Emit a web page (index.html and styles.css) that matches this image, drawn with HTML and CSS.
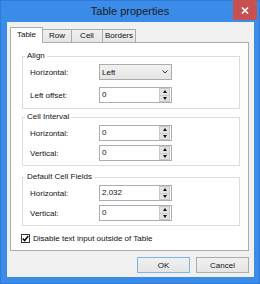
FILE: index.html
```html
<!DOCTYPE html>
<html>
<head>
<meta charset="utf-8">
<link rel="stylesheet" href="styles.css">
</head>
<body>
<div class="window">
  <div class="titlebar">
    <span class="title">Table properties</span>
    <span class="close">
      <svg width="8" height="7" viewBox="0 0 8 7"><path d="M1 0.5 L7 6.5 M7 0.5 L1 6.5" stroke="#fff" stroke-width="1.6"/></svg>
    </span>
  </div>
  <div class="client">
    <div class="tabs">
      <div class="tab active t-table">Table</div>
      <div class="tab t-row">Row</div>
      <div class="tab t-cell">Cell</div>
      <div class="tab t-borders">Borders</div>
    </div>
    <div class="panel">
      <fieldset class="group g-align">
        <legend>Align</legend>
        <div class="row">
          <label>Horizontal:</label>
          <div class="select"><span>Left</span>
            <svg width="6" height="4" viewBox="0 0 6 4"><path d="M0.5 0.5 L3 3 L5.5 0.5" fill="none" stroke="#333" stroke-width="1"/></svg>
          </div>
        </div>
        <div class="row row-gap7">
          <label>Left offset:</label>
          <div class="spin"><span class="val">0</span><span class="spin-btns"><span class="sb up"></span><span class="sb down"></span></span></div>
        </div>
      </fieldset>
      <fieldset class="group g-cell">
        <legend>Cell Interval</legend>
        <div class="row">
          <label>Horizontal:</label>
          <div class="spin"><span class="val">0</span><span class="spin-btns"><span class="sb up"></span><span class="sb down"></span></span></div>
        </div>
        <div class="row row-gap4">
          <label>Vertical:</label>
          <div class="spin"><span class="val">0</span><span class="spin-btns"><span class="sb up"></span><span class="sb down"></span></span></div>
        </div>
      </fieldset>
      <fieldset class="group g-default">
        <legend>Default Cell Fields</legend>
        <div class="row">
          <label>Horizontal:</label>
          <div class="spin"><span class="val">2.032</span><span class="spin-btns"><span class="sb up"></span><span class="sb down"></span></span></div>
        </div>
        <div class="row row-gap4">
          <label>Vertical:</label>
          <div class="spin"><span class="val">0</span><span class="spin-btns"><span class="sb up"></span><span class="sb down"></span></span></div>
        </div>
      </fieldset>
      <div class="check">
        <span class="box"><svg width="7" height="7" viewBox="0 0 7 7"><path d="M0.8 3.6 L2.7 5.6 L6.2 1" fill="none" stroke="#111" stroke-width="1.6"/></svg></span>
        <span>Disable text input outside of Table</span>
      </div>
    </div>
    <div class="buttons">
      <button class="btn default">OK</button>
      <button class="btn">Cancel</button>
    </div>
  </div>
</div>
</body>
</html>
```
FILE: styles.css
```css
html, body {
  margin: 0;
  padding: 0;
}
body {
  font-family: "Liberation Sans", Arial, sans-serif;
  font-size: 8px;
  color: #111;
}
.window {
  width: 260px;
  height: 284px;
  background: #3b8be8;
  display: flex;
  flex-direction: column;
  box-shadow: inset 0 0 0 1px #2f7ad8;
}
.titlebar {
  height: 22px;
  display: grid;
  grid-template-columns: 1fr auto 1fr;
  align-items: start;
}
.title {
  grid-column: 2;
  font-size: 11px;
  line-height: 22px;
  color: #1c1c1c;
}
.close {
  grid-column: 3;
  justify-self: end;
  margin-right: 3px;
  width: 24px;
  height: 20px;
  background: #c75050;
  display: flex;
  align-items: center;
  justify-content: center;
}
.client {
  flex: 1;
  margin: 0 6px 7px 7px;
  background: #f0f0f0;
  padding: 5px 5px 4px 3px;
  display: flex;
  flex-direction: column;
}
.tabs {
  display: flex;
  align-items: flex-end;
  height: 15px;
  position: relative;
  z-index: 1;
}
.tab {
  box-sizing: border-box;
  height: 13px;
  border-top: 1px solid #acacac;
  border-right: 1px solid #acacac;
  background: linear-gradient(#f0f0f0, #e5e5e5);
  text-align: center;
  line-height: 12px;
}
.tab.active {
  height: 16px;
  margin-bottom: -1px;
  background: #fff;
  border-left: 1px solid #acacac;
  line-height: 14px;
}
.t-table { width: 33px; }
.t-row { width: 29px; }
.t-cell { width: 31px; }
.t-borders { width: 33px; }
.panel {
  height: 209px;
  box-sizing: border-box;
  border: 1px solid #acacac;
  background: #fff;
  padding: 0 8px 0 11px;
  display: flex;
  flex-direction: column;
}
.group {
  margin: 0;
  padding: 3px 0 4px 0;
  border: 1px solid #dcdcdc;
  min-width: 0;
}
.group legend {
  padding: 0 2px;
  margin-left: 2px;
  line-height: 10px;
  height: 10px;
}
.g-align { margin-top: 8px; padding-bottom: 5px; }
.g-cell { margin-top: 3px; }
.g-default { margin-top: 6px; }
.row {
  display: flex;
  align-items: center;
  height: 16px;
  padding-left: 7px;
}
.row-gap7 { margin-top: 7px; }
.row-gap4 { margin-top: 4px; }
.row label {
  width: 69px;
}
.select {
  width: 73px;
  height: 16px;
  box-sizing: border-box;
  border: 1px solid #acacac;
  background: linear-gradient(#f2f2f2, #e5e5e5);
  display: flex;
  align-items: center;
  justify-content: space-between;
  padding: 0 3px 0 2px;
}
.spin {
  width: 73px;
  height: 16px;
  box-sizing: border-box;
  border: 1px solid #abadb3;
  background: #fff;
  display: flex;
}
.val {
  flex: 1;
  padding-left: 2px;
  line-height: 14px;
}
.spin-btns {
  width: 11px;
  display: flex;
  flex-direction: column;
  padding: 0 1px 0 0;
}
.sb {
  flex: 1;
  background: #e3e3e3;
  border: 1px solid #c8c8c8;
  display: flex;
  align-items: center;
  justify-content: center;
}
.sb.up { border-bottom: none; }
.sb::after {
  content: "";
  width: 0;
  height: 0;
  border-left: 2.5px solid transparent;
  border-right: 2.5px solid transparent;
}
.sb.up::after { border-bottom: 3px solid #111; }
.sb.down::after { border-top: 3px solid #111; }
.check {
  display: flex;
  align-items: center;
  gap: 3px;
  margin-top: 8px;
  margin-left: -1px;
}
.box {
  box-sizing: border-box;
  width: 9px;
  height: 9px;
  border: 1px solid #333;
  background: #fff;
  display: flex;
  align-items: center;
  justify-content: center;
}
.buttons {
  display: flex;
  justify-content: flex-end;
  gap: 6px;
  margin-top: 6px;
}
.btn {
  width: 53px;
  height: 16px;
  box-sizing: border-box;
  border: 1px solid #acacac;
  background: linear-gradient(#f0f0f0, #e5e5e5);
  font-family: "Liberation Sans", Arial, sans-serif;
  font-size: 8px;
  color: #111;
  padding: 0;
}
.btn.default {
  border-color: #7eb4ea;
}
```
